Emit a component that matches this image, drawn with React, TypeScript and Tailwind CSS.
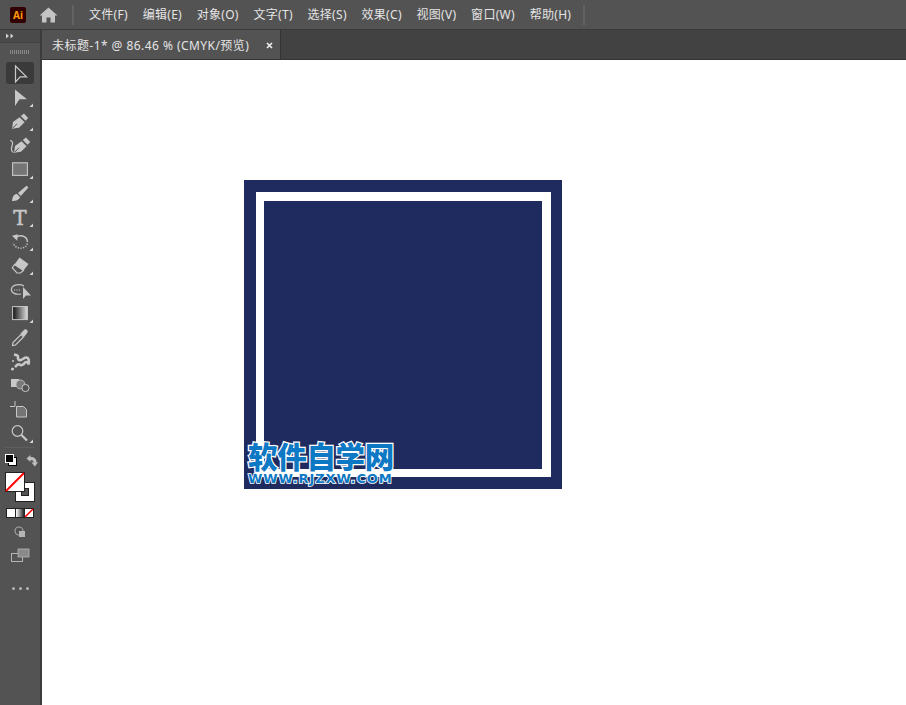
const menus = ["文件(F)", "编辑(E)", "对象(O)", "文字(T)", "选择(S)", "效果(C)", "视图(V)", "窗口(W)", "帮助(H)"];

const L = "#c8c8c8"; // tool icon light grey

function Corner() {
  return <path d="M33 18.5V22H29.5Z" fill="#d8d8d8" />;
}

// every tool sits in a 40x24 cell
const tools: { key: string; corner?: boolean; active?: boolean; icon: React.ReactNode }[] = [
  {
    key: "selection",
    active: true,
    icon: <path d="M15.5 5V21L20.2 15.8H26.5Z" fill="none" stroke={L} strokeWidth="1.2" />,
  },
  { key: "direct", corner: true, icon: <path d="M15 4.5V21L19.5 14.2H27Z" fill={L} /> },
  {
    key: "pen",
    corner: true,
    icon: (
      <>
        <path d="M12 19.8L13 13L19.5 8.2L24.6 13.2L19 18.8Z" fill={L} />
        <path d="M20.8 7L24 4.5L28.2 9L25.6 11.8Z" fill={L} />
        <path d="M12.8 19L17 14.8" stroke="#535353" strokeWidth="1" />
      </>
    ),
  },
  {
    key: "curvature",
    icon: (
      <>
        <path d="M14 19.8L15 13L21.5 8.2L26.6 13.2L21 18.8Z" fill={L} />
        <path d="M22.8 7L26 4.5L30.2 9L27.6 11.8Z" fill={L} />
        <path d="M14.8 19L19 14.8" stroke="#535353" strokeWidth="1" />
        <path d="M13.5 19.5C8.5 17 13.5 12.5 12.5 9.5C12 8 11 7.5 10 7.5" fill="none" stroke={L} strokeWidth="1.2" />
      </>
    ),
  },
  {
    key: "rect",
    corner: true,
    icon: <rect x="12.6" y="5.8" width="14.8" height="12.6" fill="#757575" stroke={L} strokeWidth="1.1" />,
  },
  {
    key: "brush",
    corner: true,
    icon: (
      <>
        <path d="M12 20C12.5 15.5 14 13 17 13L20 16C19.5 18.5 16.5 20 12 20Z" fill={L} />
        <path d="M18 12L26.5 4.8L28.4 6.6L20.8 15Z" fill={L} />
      </>
    ),
  },
  {
    key: "type",
    corner: true,
    icon: (
      <text x="20" y="19.5" textAnchor="middle" fontSize="20" fontFamily="'DejaVu Serif', serif" fill={L} stroke={L} strokeWidth="0.5">
        T
      </text>
    ),
  },
  {
    key: "rotate",
    corner: true,
    icon: (
      <>
        <path d="M15.5 8.5C19 5.5 27 6 27.5 13" fill="none" stroke={L} strokeWidth="1.4" />
        <path d="M12 6.8L17.8 5.2L17.2 11.8Z" fill={L} />
        <path d="M27.3 14.5C26.5 20 16 21.5 13 14" fill="none" stroke={L} strokeWidth="1.4" strokeDasharray="1.3 1.3" />
      </>
    ),
  },
  {
    key: "eraser",
    corner: true,
    icon: (
      <>
        <path d="M19.5 4.5L28.5 11L23.5 17.5L14.5 11.5Z" fill={L} />
        <path d="M14.5 11.5L12.3 15L17 20H20.5L23.5 17.5Z" fill="none" stroke={L} strokeWidth="1.2" />
      </>
    ),
  },
  {
    key: "puppet",
    icon: (
      <>
        <path d="M21 17C15 18 10.5 15.5 11.5 11.5C12.5 7.5 20 6.5 24 9" fill="none" stroke={L} strokeWidth="1.2" />
        <path d="M14 13H20" stroke={L} strokeWidth="1.2" strokeDasharray="1.2 1.2" />
        <path d="M23 10V22L26 18.5H31Z" fill={L} />
      </>
    ),
  },
  {
    key: "gradient",
    corner: true,
    icon: (
      <>
        <defs>
          <linearGradient id="toolGrad">
            <stop offset="0" stopColor="#111" />
            <stop offset="1" stopColor="#ddd" />
          </linearGradient>
        </defs>
        <rect x="12.6" y="5.6" width="14.8" height="13" fill="url(#toolGrad)" stroke={L} strokeWidth="1" />
      </>
    ),
  },
  {
    key: "eyedropper",
    icon: (
      <>
        <path d="M12.5 20.5L13 17.5L21 9.5L23.5 12L15.5 20Z" fill="none" stroke={L} strokeWidth="1.2" />
        <path d="M20.5 8.5L24.5 4.5C26 3.5 28.5 5.5 27.5 7.5L24 12Z" fill={L} />
      </>
    ),
  },
  {
    key: "spray",
    icon: (
      <>
        <path d="M14 5.5C16.5 6 18.5 6.5 18 8.5C17.5 10.5 19 11.5 21 11C23.5 10 24 8.5 26.5 8.5C28.5 8.5 29.5 12 28.5 15.5C28 13 26.5 12.5 25 13.5C23.5 15.5 21.5 17 19.5 15.5C18 14.5 16.5 16.5 15 18" fill="none" stroke={L} strokeWidth="2.6" />
        <circle cx="13" cy="12" r="1" fill={L} />
        <circle cx="12.5" cy="20" r="1.6" fill={L} />
      </>
    ),
  },
  {
    key: "builder",
    icon: (
      <>
        <rect x="11" y="6" width="8" height="8" fill={L} />
        <circle cx="20.5" cy="11.5" r="4.5" fill="#7a7a7a" stroke={L} strokeWidth="0.8" />
        <circle cx="25.5" cy="15" r="3.6" fill="#535353" stroke={L} strokeWidth="1" />
      </>
    ),
  },
  {
    key: "artboard",
    icon: (
      <>
        <path d="M10 9.5H15M15 4V9" stroke={L} strokeWidth="1" fill="none" />
        <path d="M16.5 9.5H23.5L26.5 12.5V20H16.5Z" fill="#757575" stroke={L} strokeWidth="1" />
      </>
    ),
  },
  {
    key: "zoom",
    corner: true,
    icon: (
      <>
        <circle cx="17.5" cy="10" r="5.3" fill="none" stroke={L} strokeWidth="1.2" />
        <path d="M21.5 14L27 19.5" stroke={L} strokeWidth="2.2" />
      </>
    ),
  },
];

function Toolbar() {
  return (
    <aside className="flex w-[42px] shrink-0 flex-col border-r-2 border-[#3b3b3b] bg-[#535353]">
      <div className="flex h-[13px] items-center border-b border-[#444444] bg-[#4a4a4a] pl-[6px]">
        <svg width="8" height="6" viewBox="0 0 8 6">
          <path d="M0 0.5L3 3L0 5.5ZM4.5 0.5L7.5 3L4.5 5.5Z" fill="#cfcfcf" />
        </svg>
      </div>
      <div className="flex h-[18px] items-center pl-[10px]">
        <div className="h-[4px] w-[20px] bg-[repeating-linear-gradient(90deg,#8a8a8a_0,#8a8a8a_1px,#535353_1px,#535353_2px)]" />
      </div>
      <div className="flex flex-col">
        {tools.map((t) => (
          <div key={t.key} className="relative h-6 w-10">
            {t.active && <div className="absolute left-[6px] top-px h-[22px] w-[28px] rounded-[3px] bg-[#3a3a3a]" />}
            <svg className="relative" width="40" height="24" viewBox="0 0 40 24">
              {t.icon}
              {t.corner && <Corner />}
            </svg>
          </div>
        ))}
      </div>
      <div className="mx-[5px] mt-[2px] h-px bg-[#5e5e5e]" />
      {/* fill / stroke block */}
      <svg className="mt-[1px]" width="40" height="72" viewBox="0 0 40 72">
        <g transform="translate(0,-448)">
          <rect x="8.5" y="456.5" width="8" height="8" fill="#fff" stroke="#000" />
          <rect x="5.5" y="453.5" width="8" height="8" fill="#000" stroke="#fff" />
          <path d="M26.5 457.5L30.5 454V456C34.5 456 36.5 458 36.5 461.5H38L34.8 465.5L31.5 461.5H33.5C33.5 459.8 32.5 459 30.5 459V461Z" fill="#bdbdbd" />
          <rect x="15.5" y="481.5" width="19" height="19" fill="#fff" stroke="#222" />
          <rect x="21.5" y="487.5" width="7" height="7" fill="#535353" stroke="#222" />
          <rect x="5.5" y="471.5" width="19" height="19" fill="#fff" stroke="#222" />
          <path d="M6 490L24 472" stroke="#f00" strokeWidth="2" />
          <rect x="6" y="507" width="28" height="10" fill="#222" />
          <rect x="7" y="508" width="8" height="8" fill="#fff" />
          <defs>
            <linearGradient id="modeGrad">
              <stop offset="0" stopColor="#fff" />
              <stop offset="1" stopColor="#222" />
            </linearGradient>
          </defs>
          <rect x="16" y="508" width="8" height="8" fill="url(#modeGrad)" />
          <rect x="25" y="508" width="8" height="8" fill="#fff" />
          <path d="M25 516L33 508" stroke="#f00" strokeWidth="1.6" />
        </g>
      </svg>
      <svg className="mt-[4px]" width="40" height="14" viewBox="0 0 40 14">
        <circle cx="19" cy="6" r="4" fill="none" stroke="#a8a8a8" strokeWidth="1.1" />
        <rect x="19" y="6" width="6" height="6" fill="#b5b5b5" />
      </svg>
      <svg className="mt-[9px]" width="40" height="15" viewBox="0 0 40 15">
        <rect x="11.5" y="5.5" width="11" height="8" fill="none" stroke="#b5b5b5" />
        <rect x="18" y="1" width="11" height="8" fill="#8a8a8a" stroke="#b5b5b5" strokeWidth="0.8" />
      </svg>
      <div className="mt-[24px] flex justify-center gap-[4px]">
        <span className="h-[3px] w-[3px] rounded-full bg-[#b5b5b5]" />
        <span className="h-[3px] w-[3px] rounded-full bg-[#b5b5b5]" />
        <span className="h-[3px] w-[3px] rounded-full bg-[#b5b5b5]" />
      </div>
    </aside>
  );
}

export default function App() {
  return (
    <div className="flex h-[705px] w-[906px] flex-col overflow-hidden bg-white font-['Noto_Sans','Noto_Sans_CJK_SC',sans-serif] text-[12px] text-[#e4e4e4]">
      {/* Menu bar */}
      <header className="flex h-[30px] shrink-0 items-center border-b border-[#3a3a3a] bg-[#535353]">
        <div className="ml-[10px] flex h-4 w-4 items-center justify-center rounded-[2px] bg-[#330000] text-[10px] font-bold leading-none text-[#ff9a00]">
          Ai
        </div>
        <svg className="ml-[13px]" width="19" height="16" viewBox="0 0 19 16">
          <path d="M9.5 0.5L0.5 8.5H3V15.5H7.5V10.5H11.5V15.5H16V8.5H18.5Z" fill="#c4c4c4" />
        </svg>
        <div className="ml-[14px] h-5 w-[2px] bg-[#626262]" />
        <nav className="ml-[15px] flex gap-[14.7px] tracking-[0.3px]">
          {menus.map((m) => (
            <span key={m} className="whitespace-nowrap leading-none">
              {m}
            </span>
          ))}
        </nav>
        <div className="ml-[12px] h-5 w-[2px] bg-[#626262]" />
      </header>

      <div className="flex min-h-0 flex-1">
        <Toolbar />
        <div className="flex min-w-0 flex-1 flex-col">
          {/* Document tabs */}
          <div className="flex h-[30px] shrink-0 border-b border-[#333333] bg-[#424242]">
            <div className="flex w-[239px] items-center justify-between border-r border-[#333333] bg-[#535353] pl-[10px] pr-[7px] pt-[2px]">
              <span className="whitespace-nowrap tracking-[0.45px]">未标题-1* @ 86.46 % (CMYK/预览)</span>
              <svg width="7" height="7" viewBox="0 0 7 7">
                <path d="M1 1L6 6M6 1L1 6" stroke="#f0f0f0" strokeWidth="1.6" />
              </svg>
            </div>
          </div>
          {/* Canvas */}
          <main className="flex-1 pl-[202px] pt-[120px]">
            <div className="relative h-[309px] w-[318px] bg-[#1f2a5e] pb-[12px] pl-[12px] pr-[11px] pt-[12px]">
              <div className="h-full w-full border-b-[8px] border-l-[8px] border-r-[9px] border-t-[9px] border-white bg-[#1f2a5e]" />
              {/* Watermark */}
              <div className="absolute left-[4px] top-[260px] w-[146px] font-['Noto_Sans_CJK_SC',sans-serif]">
                <div className="h-[30px] whitespace-nowrap text-[29.5px] font-black leading-[30px] tracking-[-0.3px] text-[#0d78c4] [-webkit-text-stroke:2.5px_white] [paint-order:stroke_fill]">
                  软件自学网
                </div>
                <div className="mt-[3px] h-[11px] whitespace-nowrap font-['DejaVu_Sans',sans-serif] text-[13px] font-bold leading-[11px] tracking-[0.9px] text-[#0d78c4] [-webkit-text-stroke:1.6px_white] [paint-order:stroke_fill]">
                  WWW.RJZXW.COM
                </div>
              </div>
            </div>
          </main>
        </div>
      </div>
    </div>
  );
}
